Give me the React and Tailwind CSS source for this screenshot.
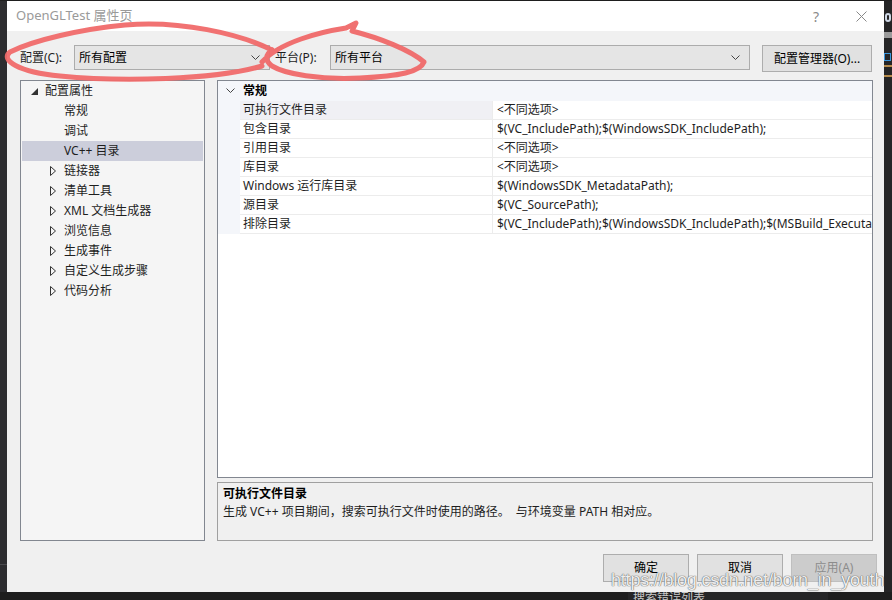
import React from "react";

const treeItems = [
  { label: "配置属性", kind: "root" },
  { label: "常规", kind: "leaf" },
  { label: "调试", kind: "leaf" },
  { label: "VC++ 目录", kind: "leaf", selected: true },
  { label: "链接器", kind: "branch" },
  { label: "清单工具", kind: "branch" },
  { label: "XML 文档生成器", kind: "branch" },
  { label: "浏览信息", kind: "branch" },
  { label: "生成事件", kind: "branch" },
  { label: "自定义生成步骤", kind: "branch" },
  { label: "代码分析", kind: "branch" },
];

const props = [
  { name: "可执行文件目录", value: "<不同选项>", selected: true },
  { name: "包含目录", value: "$(VC_IncludePath);$(WindowsSDK_IncludePath);" },
  { name: "引用目录", value: "<不同选项>" },
  { name: "库目录", value: "<不同选项>" },
  { name: "Windows 运行库目录", value: "$(WindowsSDK_MetadataPath);" },
  { name: "源目录", value: "$(VC_SourcePath);" },
  {
    name: "排除目录",
    value: "$(VC_IncludePath);$(WindowsSDK_IncludePath);$(MSBuild_ExecutablePath);$(VC_LibraryPath_x86);",
  },
];

const Chevron = ({ className = "" }) => (
  <svg width="9" height="6" viewBox="0 0 9 6" className={className}>
    <polyline points="0.5,0.5 4.5,4.5 8.5,0.5" fill="none" stroke="#444" strokeWidth="1" />
  </svg>
);

// drop-down box like the WinForms combo
const Combo = ({ text, width }) => (
  <div
    className={`${width} shrink-0 h-[25px] flex items-center justify-between pl-[4px] pr-[9px] bg-[#e5e5e5] border border-[#acacac] text-[12px] text-black`}
  >
    <span>{text}</span>
    <Chevron />
  </div>
);

const TreeRow = ({ item }) => (
  <div
    className={`h-[20px] flex items-center ${item.selected ? "bg-[#cccedb]" : ""}`}
  >
    {item.kind === "root" && (
      <>
        <svg width="7" height="7" viewBox="0 0 7 7" className="ml-[9px] mr-[7px]">
          <polygon points="7,0 7,7 0,7" fill="#333" />
        </svg>
        <span>{item.label}</span>
      </>
    )}
    {item.kind === "branch" && (
      <>
        <svg width="6" height="10" viewBox="0 0 6 10" className="ml-[28px] mr-[8px]">
          <polygon points="0.5,0.5 5.5,5 0.5,9.5" fill="none" stroke="#333" strokeWidth="1" />
        </svg>
        <span>{item.label}</span>
      </>
    )}
    {item.kind === "leaf" && <span className="ml-[42px]">{item.label}</span>}
  </div>
);

export default function App() {
  return (
    <div className="relative w-[892px] h-[600px] bg-[#2d2d30] overflow-hidden font-['Noto_Sans','Noto_Sans_CJK_SC',sans-serif] text-[12px] text-[#1e1e1e]">
      <div className="h-[1px] bg-[#1e1e1e]" />
      <div className="flex h-[591px]">
        {/* dark strip of the ide on the left */}
        <div className="w-[7px] shrink-0 bg-[#2d2d30] flex flex-col">
          <div className="h-[563px]" />
          <div className="h-[1px] bg-[#4a4a4e]" />
        </div>

        {/* dialog */}
        <div className="w-[877px] shrink-0 flex flex-col bg-[#f0f0f0]">
          <div className="h-[30px] bg-white flex items-center pl-[9px] pr-[17px]">
            <span className="text-[13px] text-[#9a9a9a]">OpenGLTest 属性页</span>
            <span className="ml-auto text-[14px] text-[#8a8a8a] mr-[37px]">?</span>
            <svg width="11" height="11" viewBox="0 0 11 11">
              <path d="M0.5 0.5 L10.5 10.5 M10.5 0.5 L0.5 10.5" stroke="#888" strokeWidth="1" />
            </svg>
          </div>

          <div className="flex flex-col pl-[13px] pr-[11px] pt-[14px]">
            <div className="flex items-start h-[35px]">
              <span className="mt-[4px] w-[54px] shrink-0">配置(C):</span>
              <Combo text="所有配置" width="w-[196px]" />
              <span className="mt-[4px] ml-[5px] w-[55px] shrink-0">平台(P):</span>
              <Combo text="所有平台" width="w-[420px]" />
              <button className="ml-[12px] w-[110px] shrink-0 h-[27px] bg-[#e1e1e1] border border-[#adadad] text-[12px] text-black">
                配置管理器(O)...
              </button>
            </div>

            <div className="flex gap-[12px] h-[461px]">
              {/* category tree */}
              <div className="w-[185px] shrink-0 border border-[#828790] bg-[#f5f5f5] p-[1px] pt-0">
                {treeItems.map((item) => (
                  <TreeRow key={item.label} item={item} />
                ))}
              </div>

              <div className="w-[656px] shrink-0 flex flex-col gap-[4px]">
                {/* property grid */}
                <div className="h-[398px] border border-[#828790] bg-white flex flex-col overflow-hidden">
                  <div className="h-[20px] flex items-center bg-[#f4f6fa]">
                    <div className="w-[22px] flex justify-center">
                      <Chevron className="ml-[2px]" />
                    </div>
                    <span className="ml-[3px] font-bold text-black">常规</span>
                  </div>
                  {props.map((p) => (
                    <div key={p.name} className="h-[19px] flex">
                      <div className="w-[22px] bg-[#f4f6fa]" />
                      <div
                        className={`w-[252px] flex items-center pl-[3px] border-b border-[#ececec] whitespace-nowrap ${
                          p.selected ? "bg-[#f0f0f4]" : ""
                        }`}
                      >
                        {p.name}
                      </div>
                      <div className="flex-1 flex items-center pl-[4px] border-b border-l border-[#ececec] whitespace-nowrap overflow-hidden">
                        {p.value}
                      </div>
                    </div>
                  ))}
                </div>

                {/* description */}
                <div className="h-[59px] border border-[#a0a0a0] bg-[#f0f0f0] px-[5px] pt-[2px]">
                  <div className="h-[18px] flex items-center font-bold text-black">可执行文件目录</div>
                  <div className="h-[18px] flex items-center whitespace-pre">
                    生成 VC++ 项目期间，搜索可执行文件时使用的路径。  与环境变量 PATH 相对应。
                  </div>
                </div>
              </div>
            </div>

            <div className="flex justify-end gap-[8px] mt-[13px] mr-[-4px]">
              <button className="w-[86px] h-[28px] bg-[#e1e1e1] border border-[#adadad] text-black">确定</button>
              <button className="w-[86px] h-[28px] bg-[#e1e1e1] border border-[#adadad] text-black">取消</button>
              <button className="w-[86px] h-[28px] bg-[#cccccc] border border-[#bfbfbf] text-[#8c8c8c]">
                应用(A)
              </button>
            </div>
          </div>
        </div>

        {/* dark strip of the ide on the right */}
        <div className="w-[8px] shrink-0 bg-[#252526] flex flex-col">
          <div className="h-[12px]" />
          <div className="h-[9px] w-[6px] ml-[1px] border-2 border-[#cfd8e6] rounded-full" />
          <div className="h-[10px]" />
          <div className="h-[6px] bg-[#9a9a9a]" />
          <div className="h-[15px]" />
          <div className="h-[8px] w-[7px] border border-[#3a96dd]" />
          <div className="h-[4px]" />
          <div className="h-[2px] bg-[#b58b4c]" />
          <div className="h-[8px]" />
          <div className="h-[2px] bg-[#b58b4c]" />
        </div>
      </div>

      {/* bottom bar with the error-list search box */}
      <div className="h-[8px] bg-[#1e1e1e] flex">
        <div className="ml-[628px] w-[200px] h-[8px] bg-[#252526] overflow-hidden pl-[5px]">
          <div className="text-[12px] leading-[14px] text-[#c8c8c8] mt-[-1px]">搜索错误列表</div>
        </div>
      </div>

      {/* watermark */}
      <div className="absolute left-[611px] top-[567px] text-[18px] tracking-[-0.2px] text-white/90 [text-shadow:0_0_1px_#555,0_0_1px_#555] pointer-events-none whitespace-nowrap font-['Liberation_Sans',sans-serif]">
        https://blog.csdn.net/born_in_youth
      </div>

      {/* red hand-drawn marks */}
      <svg className="absolute inset-0 pointer-events-none" width="892" height="600" viewBox="0 0 892 600">
        <g fill="none" stroke="#f06a6a" strokeWidth="5" strokeLinecap="round" strokeLinejoin="round" opacity="0.95">
          <path d="M272 50 C240 34 180 20 125 25 C82 29 34 40 10 52 C0 60 18 72 60 76 C120 82 215 80 262 66" />
          <path d="M262 62 C280 42 320 32 346 28 L356 23 L352 31 C380 38 410 50 424 62 C420 72 400 76 360 78 C320 80 285 74 272 66 C264 60 266 54 272 50" />
        </g>
      </svg>
    </div>
  );
}
